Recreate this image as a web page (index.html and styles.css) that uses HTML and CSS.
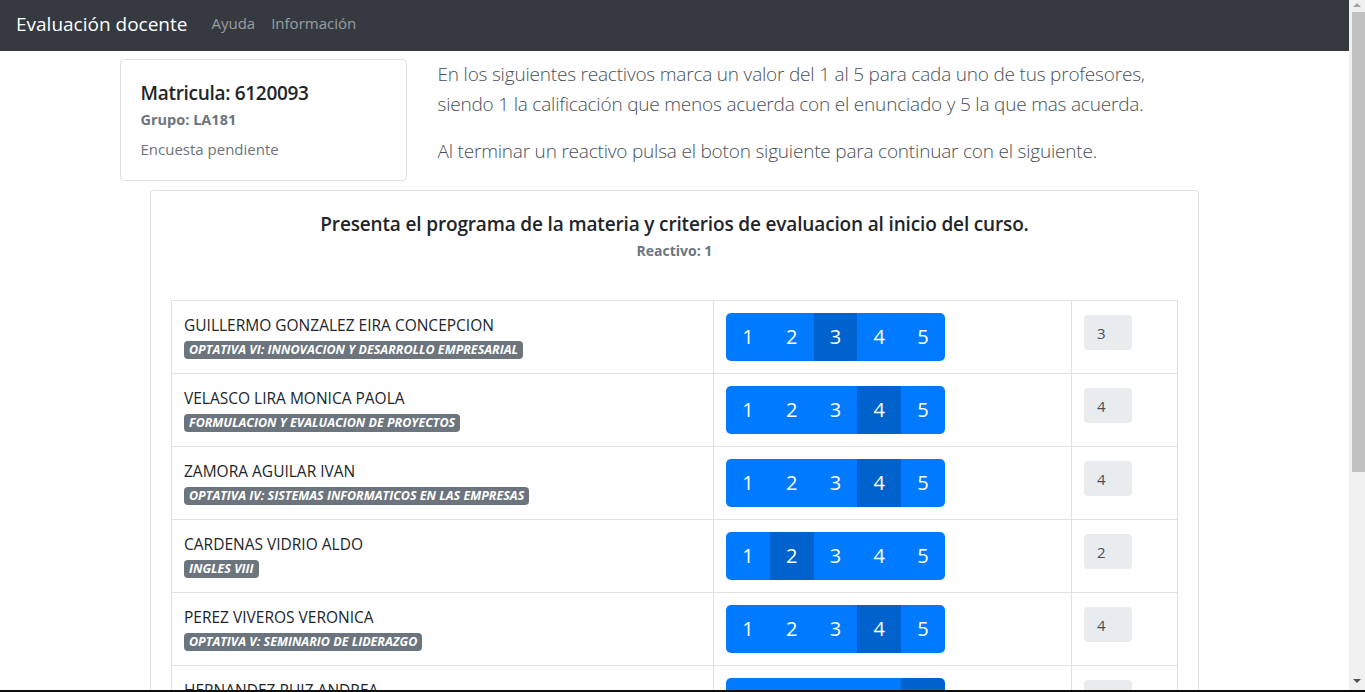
FILE: index.html
```html
<!DOCTYPE html>
<html lang="es">
<head>
<meta charset="utf-8">
<title>Evaluación docente</title>
<link rel="stylesheet" href="styles.css">
</head>
<body>
<div class="page">
  <nav class="navbar">
    <a class="brand" href="#">Evaluación docente</a>
    <ul class="nav-links">
      <li><a href="#">Ayuda</a></li>
      <li><a href="#">Información</a></li>
    </ul>
  </nav>
  <main class="container">
    <div class="intro">
      <div class="student-card">
        <h5 class="student-id">Matricula: 6120093</h5>
        <h6 class="student-group">Grupo: LA181</h6>
        <p class="student-status">Encuesta pendiente</p>
      </div>
      <div class="instructions">
        <p>En los siguientes reactivos marca un valor del 1 al 5 para cada uno de tus profesores, siendo 1 la calificación que menos acuerda con el enunciado y 5 la que mas acuerda.</p>
        <p>Al terminar un reactivo pulsa el boton siguiente para continuar con el siguiente.</p>
      </div>
    </div>
    <section class="question-card">
      <h5 class="question-title">Presenta el programa de la materia y criterios de evaluacion al inicio del curso.</h5>
      <h6 class="question-num">Reactivo: 1</h6>
      <table class="eval-table">
        <tbody>
          <tr>
            <td class="c-teacher"><div class="name">GUILLERMO GONZALEZ EIRA CONCEPCION</div><div class="subject"><span class="badge">OPTATIVA VI: INNOVACION Y DESARROLLO EMPRESARIAL</span></div></td>
            <td class="c-score"><div class="btn-group"><button>1</button><button>2</button><button class="active">3</button><button>4</button><button>5</button></div></td>
            <td class="c-value"><input class="value-box" type="text" value="3" readonly></td>
          </tr>
          <tr>
            <td class="c-teacher"><div class="name">VELASCO LIRA MONICA PAOLA</div><div class="subject"><span class="badge">FORMULACION Y EVALUACION DE PROYECTOS</span></div></td>
            <td class="c-score"><div class="btn-group"><button>1</button><button>2</button><button>3</button><button class="active">4</button><button>5</button></div></td>
            <td class="c-value"><input class="value-box" type="text" value="4" readonly></td>
          </tr>
          <tr>
            <td class="c-teacher"><div class="name">ZAMORA AGUILAR IVAN</div><div class="subject"><span class="badge">OPTATIVA IV: SISTEMAS INFORMATICOS EN LAS EMPRESAS</span></div></td>
            <td class="c-score"><div class="btn-group"><button>1</button><button>2</button><button>3</button><button class="active">4</button><button>5</button></div></td>
            <td class="c-value"><input class="value-box" type="text" value="4" readonly></td>
          </tr>
          <tr>
            <td class="c-teacher"><div class="name">CARDENAS VIDRIO ALDO</div><div class="subject"><span class="badge">INGLES VIII</span></div></td>
            <td class="c-score"><div class="btn-group"><button>1</button><button class="active">2</button><button>3</button><button>4</button><button>5</button></div></td>
            <td class="c-value"><input class="value-box" type="text" value="2" readonly></td>
          </tr>
          <tr>
            <td class="c-teacher"><div class="name">PEREZ VIVEROS VERONICA</div><div class="subject"><span class="badge">OPTATIVA V: SEMINARIO DE LIDERAZGO</span></div></td>
            <td class="c-score"><div class="btn-group"><button>1</button><button>2</button><button>3</button><button class="active">4</button><button>5</button></div></td>
            <td class="c-value"><input class="value-box" type="text" value="4" readonly></td>
          </tr>
          <tr>
            <td class="c-teacher"><div class="name">HERNANDEZ RUIZ ANDREA</div><div class="subject"><span class="badge">OPTATIVA III: MERCADOTECNIA</span></div></td>
            <td class="c-score"><div class="btn-group"><button>1</button><button>2</button><button>3</button><button>4</button><button class="active">5</button></div></td>
            <td class="c-value"><input class="value-box" type="text" value="5" readonly></td>
          </tr>
        </tbody>
      </table>
    </section>
  </main>
</div>
<div class="scrollbar" aria-hidden="true">
  <span class="sb-arrow sb-up"></span>
  <span class="sb-thumb"></span>
  <span class="sb-fill"></span>
  <span class="sb-arrow sb-down"></span>
</div>
<div class="screen-edge" aria-hidden="true"></div>
</body>
</html>
```
FILE: styles.css
```css
* { box-sizing: border-box; }
html, body { margin: 0; padding: 0; }
body {
  display: flex;
  align-items: flex-start;
  font-family: "Open Sans", "Noto Sans", sans-serif;
  font-size: 16px;
  line-height: 1.5;
  color: #212529;
  background: #fff;
}
h5, h6, p { margin: 0; }

.page {
  flex: 1 1 auto;
  min-width: 0;
}

/* classic scrollbar strip */
.scrollbar {
  flex: 0 0 16px;
  height: 692px;
  position: sticky;
  top: 0;
  display: flex;
  flex-direction: column;
  align-items: center;
  background: #f0f0f0;
}
.sb-arrow {
  display: block;
  width: 0;
  height: 0;
  border-left: 4px solid transparent;
  border-right: 4px solid transparent;
}
.sb-up {
  margin-top: 3px;
  border-bottom: 4px solid #a3a3a3;
}
.sb-thumb {
  display: block;
  width: 13px;
  height: 460px;
  margin: 5px 0 0 2px;
  background: #c1c1c1;
}
.sb-fill { flex: 1 1 auto; }
.sb-down {
  margin-bottom: 9px;
  border-top: 4px solid #505050;
}
.screen-edge {
  position: fixed;
  left: 0;
  right: 0;
  bottom: 0;
  height: 2px;
  background: #0d0d0d;
}

.navbar {
  display: flex;
  align-items: center;
  height: 51px;
  padding: 0 16px;
  background: #343a40;
}
.brand {
  color: #fff;
  text-decoration: none;
  font-size: 19px;
  line-height: 30px;
  margin-right: 16px;
  margin-top: -3px;
}
.nav-links {
  display: flex;
  list-style: none;
  margin: -4px 0 0;
  padding: 0;
}
.nav-links a {
  display: block;
  padding: 0 8px;
  color: rgba(255,255,255,.5);
  text-decoration: none;
  font-size: 15px;
}

.container {
  max-width: 1140px;
  margin: 0 auto;
  padding: 0 15px 40px;
}
.intro {
  display: flex;
  align-items: flex-start;
  gap: 31px;
  margin-top: 8px;
}
.student-card {
  flex: 0 0 287px;
  height: 122px;
  border: 1px solid rgba(0,0,0,.125);
  border-radius: 4px;
  padding: 20px 20px;
}
.student-id {
  font-size: 19px;
  font-weight: 600;
  letter-spacing: -0.3px;
  line-height: 26px;
}
.student-group {
  font-size: 14.5px;
  font-weight: 700;
  color: #6c757d;
  line-height: 22px;
  margin-top: 3px;
}
.student-status {
  font-size: 15px;
  color: #6c757d;
  line-height: 22px;
  margin-top: 7px;
}
.instructions {
  width: 740px;
  font-size: 19px;
  font-weight: 300;
  letter-spacing: -0.2px;
  line-height: 30px;
  color: #495057;
}
.instructions p + p { margin-top: 17px; }

.question-card {
  width: 1049px;
  margin: 9px auto 0;
  border: 1px solid rgba(0,0,0,.125);
  border-radius: 4px;
  padding: 20px;
}
.question-title {
  text-align: center;
  font-size: 19px;
  font-weight: 600;
  letter-spacing: -0.15px;
  line-height: 26px;
}
.question-num {
  text-align: center;
  font-size: 14px;
  font-weight: 700;
  color: #6c757d;
  line-height: 20px;
  margin-top: 4px;
}
.eval-table {
  width: 100%;
  margin-top: 39px;
  border-collapse: collapse;
}
.eval-table td {
  border: 1px solid #dee2e6;
  padding: 12px;
  vertical-align: top;
}
.c-teacher { width: 542px; }
.c-score { width: 358px; }
.name {
  font-size: 15.5px;
  line-height: 24px;
}
.subject { line-height: 24px; }
.badge {
  display: inline-block;
  background: #6c757d;
  color: #fff;
  font-size: 12.5px;
  font-weight: 700;
  font-style: italic;
  line-height: 1;
  padding: 3px 5px 2px;
  border-radius: 4px;
  vertical-align: 1px;
}
.btn-group {
  display: inline-flex;
  border-radius: 5px;
  overflow: hidden;
}
.btn-group button {
  width: 43.8px;
  height: 48px;
  border: 0;
  margin: 0;
  padding: 0;
  background: #007bff;
  color: #fff;
  font-family: inherit;
  font-size: 20px;
  line-height: 48px;
}
.btn-group button.active { background: #0062cc; }
.value-box {
  display: block;
  width: 48px;
  height: 35px;
  margin-top: 2px;
  border: 0;
  border-radius: 4px;
  background: #e9ecef;
  color: #495057;
  font-family: inherit;
  font-size: 15px;
  padding: 0 0 0 13px;
}
```
